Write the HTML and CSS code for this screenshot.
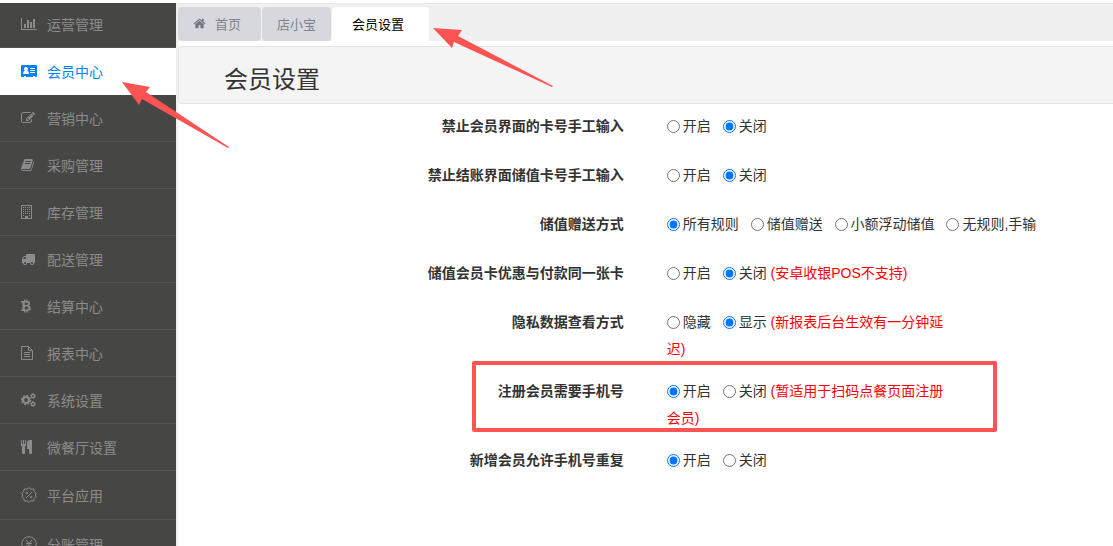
FILE: index.html
```html
<!DOCTYPE html>
<html lang="zh-CN">
<head>
    <meta charset="UTF-8">
    <meta name="viewport" content="width=device-width, initial-scale=1.0">
    <title>会员设置</title>
    <link rel="stylesheet" href="styles.css">
</head>
<body>
    <div class="layout">
        <nav class="sidebar">
            <a href="#" class="menu-item first">
                <svg class="icon" viewBox="0 0 2048 1792"><path d="M640 896v512h-256v-512h256zm384-512v1024h-256v-1024h256zm1024 1152v128h-2048v-1536h128v1408h1920zm-640-896v768h-256v-768h256zm384-384v1152h-256v-1152h256z"/></svg>
                <span>运营管理</span>
            </a>
            <a href="#" class="menu-item active">
                <svg class="icon" viewBox="0 0 16 14"><path fill-rule="evenodd" d="M1 1h14q1 0 1 1v10q0 1-1 1h-1v-1h-2v1H5v-1H3v1H1q-1 0-1-1V2q0-1 1-1zM5 3a2 2 0 0 0-2 2q0 1 .7 1.700Q2 7.200 2 10h6q0-2.800-1.700-3.300Q7 6 7 5a2 2 0 0 0-2-2zM9 4v1h5V4zM9 6v1h5V6zM9 8v1h5V8z"/></svg>
                <span>会员中心</span>
            </a>
            <a href="#" class="menu-item">
                <svg class="icon" viewBox="0 0 2048 1792"><path d="M888 1184l116-116-152-152-116 116v56h96v96h56zm440-720q-16-16-33 1l-350 350q-17 17-1 33t33-1l350-350q17-17 1-33zm80 594v190q0 119-84.500 203.500t-203.500 84.500h-832q-119 0-203.500-84.500t-84.500-203.500v-832q0-119 84.500-203.500t203.500-84.500h832q63 0 117 25 15 7 18 23 3 17-9 29l-49 49q-14 14-32 8-23-6-45-6h-832q-66 0-113 47t-47 113v832q0 66 47 113t113 47h832q66 0 113-47t47-113v-126q0-13 9-22l64-64q15-15 35-7t20 29zm-96-738l288 288-672 672h-288v-288zm444 132l-92 92-288-288 92-92q28-28 68-28t68 28l152 152q28 28 28 68t-28 68z"/></svg>
                <span>营销中心</span>
            </a>
            <a href="#" class="menu-item">
                <svg class="icon" viewBox="64 0 2048 1792"><path d="M1703 478q40 57 18 129l-275 906q-19 64-76.500 107.500t-122.500 43.500h-923q-77 0-148.500-53.500t-99.500-131.500q-24-67-2-127 0-4 3-27t4-37q1-8-3-21.500t-3-19.500q2-11 8-21t16.500-23.500 16.500-23.500q23-38 45-91.500t30-91.500q3-10 .5-30t-.5-28q3-11 17-28t17-23q21-36 42-92t25-90q1-9-2.500-32t.5-28q4-13 22-30.500t22-22.500q19-26 42.500-84.500t27.500-96.500q1-8-3-25.500t-2-26.500q2-8 9-18t18-23 17-21q8-12 16.500-30.500t15-35 16-36 19.500-32 26.500-23.500 36-11.500 47.500 5.500l-1 3q38-9 51-9h761q74 0 114 56t18 130l-274 906q-36 119-71.500 153.500t-128.500 34.500h-869q-27 0-38 15-11 16-1 43 24 70 144 70h923q29 0 56-15.500t35-41.500l300-987q7-22 5-57 38 15 59 43zm-1064 2q-4 13 2 22.500t20 9.500h608q13 0 25.500-9.500t16.500-22.500l21-64q4-13-2-22.500t-20-9.500h-608q-13 0-25.500 9.500t-16.500 22.500zm-83 256q-4 13 2 22.500t20 9.500h608q13 0 25.500-9.500t16.500-22.500l21-64q4-13-2-22.500t-20-9.500h-608q-13 0-25.500 9.500t-16.500 22.500z"/></svg>
                <span>采购管理</span>
            </a>
            <a href="#" class="menu-item">
                <svg class="icon" viewBox="0 0 16 14"><path fill-rule="evenodd" d="M0 0h11v14H0zM1 1v12h3v-2h3v2h3V1z"/><path d="M2 2h1v1H2zm2 0h1v1H4zm2 0h1v1H6zm2 0h1v1H8zM2 4h1v1H2zm2 0h1v1H4zm2 0h1v1H6zm2 0h1v1H8zM2 6h1v1H2zm2 0h1v1H4zm2 0h1v1H6zm2 0h1v1H8zM2 8h1v1H2zm2 0h1v1H4zm2 0h1v1H6zm2 0h1v1H8zM2 10h1v1H2zm6 0h1v1H8z"/></svg>
                <span>库存管理</span>
            </a>
            <a href="#" class="menu-item">
                <svg class="icon" viewBox="0 0 2048 1792"><path d="M640 1408q0-52-38-90t-90-38-90 38-38 90 38 90 90 38 90-38 38-90zm-384-512h384v-256h-158q-13 0-22 9l-195 195q-9 9-9 22v30zm1280 512q0-52-38-90t-90-38-90 38-38 90 38 90 90 38 90-38 38-90zm256-1088v1024q0 15-4 26.500t-13.500 18.500-16.500 11.500-23.500 6-22.500 2-25.500 0-22.500-.5q0 106-75 181t-181 75-181-75-75-181h-384q0 106-75 181t-181 75-181-75-75-181h-64q-3 0-22.500.5t-25.500 0-22.500-2-23.500-6-16.500-11.500-13.500-18.500-4-26.500q0-26 19-45t45-19v-320q0-8-.5-35t0-38 2.500-34.500 6.500-37 14-30.500 22.500-30l198-198q19-19 50.500-32t58.500-13h160v-192q0-26 19-45t45-19h1024q26 0 45 19t19 45z"/></svg>
                <span>配送管理</span>
            </a>
            <a href="#" class="menu-item">
                <svg class="icon" viewBox="0 0 16 14"><path fill-rule="evenodd" d="M0 2h3V.500h1.300V2h1V.500h1.300v1.600Q9.200 2.500 9.200 4.500 9.200 6 7.800 6.600 9.900 7.200 9.900 9.200 9.900 11.800 6.600 12v1.500H5.300V12h-1v1.500H3V12H0l.3-1.400h1.200V3.400H0zm3.800 1.500v2.600h1.400q1.900 0 1.900-1.300T5.200 3.500zm0 3.900v3.100h1.700q2.200 0 2.200-1.600T5.500 7.400z"/></svg>
                <span>结算中心</span>
            </a>
            <a href="#" class="menu-item">
                <svg class="icon line" viewBox="0 0 16 14"><path d="M.5.500h7l4 4v9H.5zM7.500.500v4h4M3 6.500h6M3 8.500h6M3 10.500h6"/></svg>
                <span>报表中心</span>
            </a>
            <a href="#" class="menu-item">
                <svg class="icon line" viewBox="0 0 16 14"><circle cx="5" cy="7" r="3" stroke-width="2.200"/><circle cx="5" cy="7" r="4.600" stroke-width="1.200" stroke-dasharray="1.800 1.813"/><circle cx="12" cy="3" r="1.600" stroke-width="1.300"/><circle cx="12" cy="3" r="2.500" stroke-dasharray="1.300 1.318"/><circle cx="12" cy="11" r="1.600" stroke-width="1.300"/><circle cx="12" cy="11" r="2.500" stroke-dasharray="1.300 1.318"/></svg>
                <span>系统设置</span>
            </a>
            <a href="#" class="menu-item">
                <svg class="icon" viewBox="0 0 16 14"><path d="M0 0h1v4h1V0h1v4h1V0h1v5q0 1-1 1.500V13q0 1-1 1H2q-1 0-1-1V6.500Q0 6 0 5zM11 0v13q0 1-1 1H9q-1 0-1-1V9H6V3q0-3 3-3z"/></svg>
                <span>微餐厅设置</span>
            </a>
            <a href="#" class="menu-item tall">
                <svg class="icon-large" viewBox="0 0 16 16"><path d="M8 .7l2 1.500 2.800-.2.400 2.600 2.100 1.600L14.200 8l1.100 1.800-2.100 1.600-.4 2.600-2.800-.2-2 1.500-2-1.500-2.800.2-.4-2.600L.7 9.800 1.800 8 .7 6.200l2.100-1.600L3.200 2l2.800.2zM5 11l6-6"/><circle cx="5.800" cy="6" r=".8"/><circle cx="10.200" cy="10" r=".8"/></svg>
                <span>平台应用</span>
            </a>
            <a href="#" class="menu-item tall">
                <svg class="icon-large" viewBox="0 0 16 16"><circle cx="8" cy="8" r="7.300"/><path d="M5 4l3 3.500L11 4M5 7.500h6M5 10h6M8 7.500V13"/></svg>
                <span>分账管理</span>
            </a>
        </nav>

        <main class="main">
            <div class="tabs">
                <button type="button" class="tab tab-home">
                    <svg class="icon-home" viewBox="0 0 1792 1792"><path d="M1472 992v480q0 26-19 45t-45 19h-384v-384h-256v384h-384q-26 0-45-19t-19-45v-480q0-1 .5-3t.5-3l575-474 575 474q1 2 1 6zm223-69l-62 74q-8 9-21 11h-3q-13 0-21-7l-692-577-692 577q-12 8-24 7-13-2-21-11l-62-74q-8-10-7-23.500t11-21.500l719-599q32-26 76-26t76 26l244 204v-195q0-14 9-23t23-9h192q14 0 23 9t9 23v408l219 182q10 8 11 21.500t-7 23.500z"/></svg>
                    首页
                </button>
                <button type="button" class="tab">店小宝</button>
                <button type="button" class="tab tab-active">会员设置</button>
            </div>

            <header class="page-header">
                <h1>会员设置</h1>
            </header>

            <form class="settings">
                <div class="row" role="radiogroup" aria-labelledby="l1">
                    <div class="row-label" id="l1">禁止会员界面的卡号手工输入</div>
                    <div class="field">
                        <label><input type="radio" name="member_input">开启</label>
                        <label><input type="radio" name="member_input" checked>关闭</label>
                    </div>
                </div>
                <div class="row" role="radiogroup" aria-labelledby="l2">
                    <div class="row-label" id="l2">禁止结账界面储值卡号手工输入</div>
                    <div class="field">
                        <label><input type="radio" name="checkout_input">开启</label>
                        <label><input type="radio" name="checkout_input" checked>关闭</label>
                    </div>
                </div>
                <div class="row" role="radiogroup" aria-labelledby="l3">
                    <div class="row-label" id="l3">储值赠送方式</div>
                    <div class="field field-wide">
                        <label><input type="radio" name="gift_mode" checked>所有规则</label>
                        <label><input type="radio" name="gift_mode">储值赠送</label>
                        <label><input type="radio" name="gift_mode">小额浮动储值</label>
                        <label><input type="radio" name="gift_mode">无规则,手输</label>
                    </div>
                </div>
                <div class="row" role="radiogroup" aria-labelledby="l4">
                    <div class="row-label" id="l4">储值会员卡优惠与付款同一张卡</div>
                    <div class="field">
                        <label><input type="radio" name="same_card">开启</label>
                        <label><input type="radio" name="same_card" checked>关闭</label>
                        <span class="note">(安卓收银POS不支持)</span>
                    </div>
                </div>
                <div class="row" role="radiogroup" aria-labelledby="l5">
                    <div class="row-label" id="l5">隐私数据查看方式</div>
                    <div class="field">
                        <label><input type="radio" name="privacy">隐藏</label>
                        <label><input type="radio" name="privacy" checked>显示</label>
                        <span class="note">(新报表后台生效有一分钟延迟)</span>
                    </div>
                </div>
                <div class="row" role="radiogroup" aria-labelledby="l6">
                    <div class="row-label" id="l6">注册会员需要手机号</div>
                    <div class="field">
                        <label><input type="radio" name="need_phone" checked>开启</label>
                        <label><input type="radio" name="need_phone">关闭</label>
                        <span class="note">(暂适用于扫码点餐页面注册会员)</span>
                    </div>
                </div>
                <div class="row" role="radiogroup" aria-labelledby="l7">
                    <div class="row-label" id="l7">新增会员允许手机号重复</div>
                    <div class="field">
                        <label><input type="radio" name="repeat_phone" checked>开启</label>
                        <label><input type="radio" name="repeat_phone">关闭</label>
                    </div>
                </div>
            </form>
        </main>
    </div>

    <!-- Guide marks over the page -->
    <svg class="arrow arrow-menu" viewBox="0 0 108 67"><path d="M0 0l28 5-4 5 83 55-1 1L20 17l-3 6z"/></svg>
    <svg class="arrow arrow-tab" viewBox="0 0 121 60"><path d="M0 0l29 2-4 6 95 50-1 1L21 14l-2 6z"/></svg>
    <div class="mark-box"></div>
</body>
</html>
```

FILE: styles.css
```css
/* General styles */
:root {
    --side-bg: #464744;
    --side-line: #535451;
    --side-text: #8b8b8b;
    --blue: #0080ff;
    --strip: #f0f0f0;
    --mark: #fc5353;
}

* {
    box-sizing: border-box;
}

body {
    margin: 0;
    padding-top: 3px;
    height: 100vh;
    overflow: hidden;
    position: relative;
    background: #fff;
    color: #333;
    font-family: "Liberation Sans", "Noto Sans CJK SC", sans-serif;
    font-size: 14px;
}

.layout {
    display: flex;
    height: 100%;
}

/* Sidebar */
.sidebar {
    flex: 0 0 178px;
    overflow: hidden;
    background: var(--side-bg);
    border-right: 2px solid var(--strip);
}

.menu-item {
    display: flex;
    align-items: center;
    gap: 10px;
    height: 47px;
    padding-left: 21px;
    border-bottom: 1px solid var(--side-line);
    color: var(--side-text);
    text-decoration: none;
}

.menu-item.first {
    height: 45px;
    padding-bottom: 2px;
}

.menu-item.tall {
    height: 49px;
}

.menu-item.active {
    background: #fff;
    border-color: #fff;
    color: var(--blue);
}

.icon {
    width: 16px;
    height: 14px;
    fill: currentColor;
}

.icon.line,
.icon-large {
    fill: none;
    stroke: currentColor;
}

.icon-large {
    width: 16px;
    height: 16px;
}

/* Tabs */
.main {
    flex: 1;
    min-width: 0;
}

.tabs {
    display: flex;
    gap: 1px;
    height: 38px;
    padding-top: 3px;
    background: var(--strip);
    border-top: 1px solid #e8e8e8;
}

.tab {
    display: flex;
    align-items: center;
    padding: 0 15px 2px;
    border: 0;
    border-radius: 4px;
    background: #d7d8de;
    color: #80838c;
    font-family: inherit;
    font-size: 13px;
    cursor: pointer;
}

.tab-home {
    gap: 9px;
    padding-right: 20px;
}

.tab-active {
    padding-right: 25px;
    padding-left: 20px;
    border-radius: 4px 4px 0 0;
    background: #fff;
    color: #000;
}

.icon-home {
    width: 13px;
    height: 13px;
    fill: #747780;
}

/* Page title */
.page-header {
    margin-top: 5px;
    padding: 15px 45px 6px;
    background: #f4f4f4;
    border: 1px solid #e4e4e4;
    border-right: 0;
    border-radius: 4px 0 0 4px;
}

.page-header h1 {
    margin: 0;
    font-size: 24px;
    font-weight: normal;
    line-height: 35px;
}

/* Settings form */
.settings {
    padding-top: 9px;
    line-height: 27px;
}

.row {
    display: flex;
    gap: 40px;
    min-height: 34px;
    margin-bottom: 15px;
}

.row-label {
    flex: 0 0 48%;
    padding-right: 3px;
    font-weight: bold;
    text-align: right;
}

.field {
    max-width: 280px;
}

.field-wide {
    max-width: none;
    white-space: nowrap;
}

.field label {
    margin-right: 8px;
}

.field label:nth-last-of-type(1) {
    margin-right: 0;
}

.field input {
    width: 13px;
    height: 13px;
    margin: 0 3px 0 0;
    vertical-align: -2px;
}

.note {
    color: #f00;
}

/* Guide marks */
.arrow {
    position: absolute;
    fill: var(--mark);
}

.arrow-menu {
    top: 82px;
    left: 122px;
    width: 108px;
    height: 67px;
}

.arrow-tab {
    top: 28px;
    left: 433px;
    width: 121px;
    height: 60px;
}

.mark-box {
    position: absolute;
    top: 361px;
    left: 472px;
    width: 525px;
    height: 71px;
    border: 4px solid var(--mark);
    border-radius: 2px;
}
```
